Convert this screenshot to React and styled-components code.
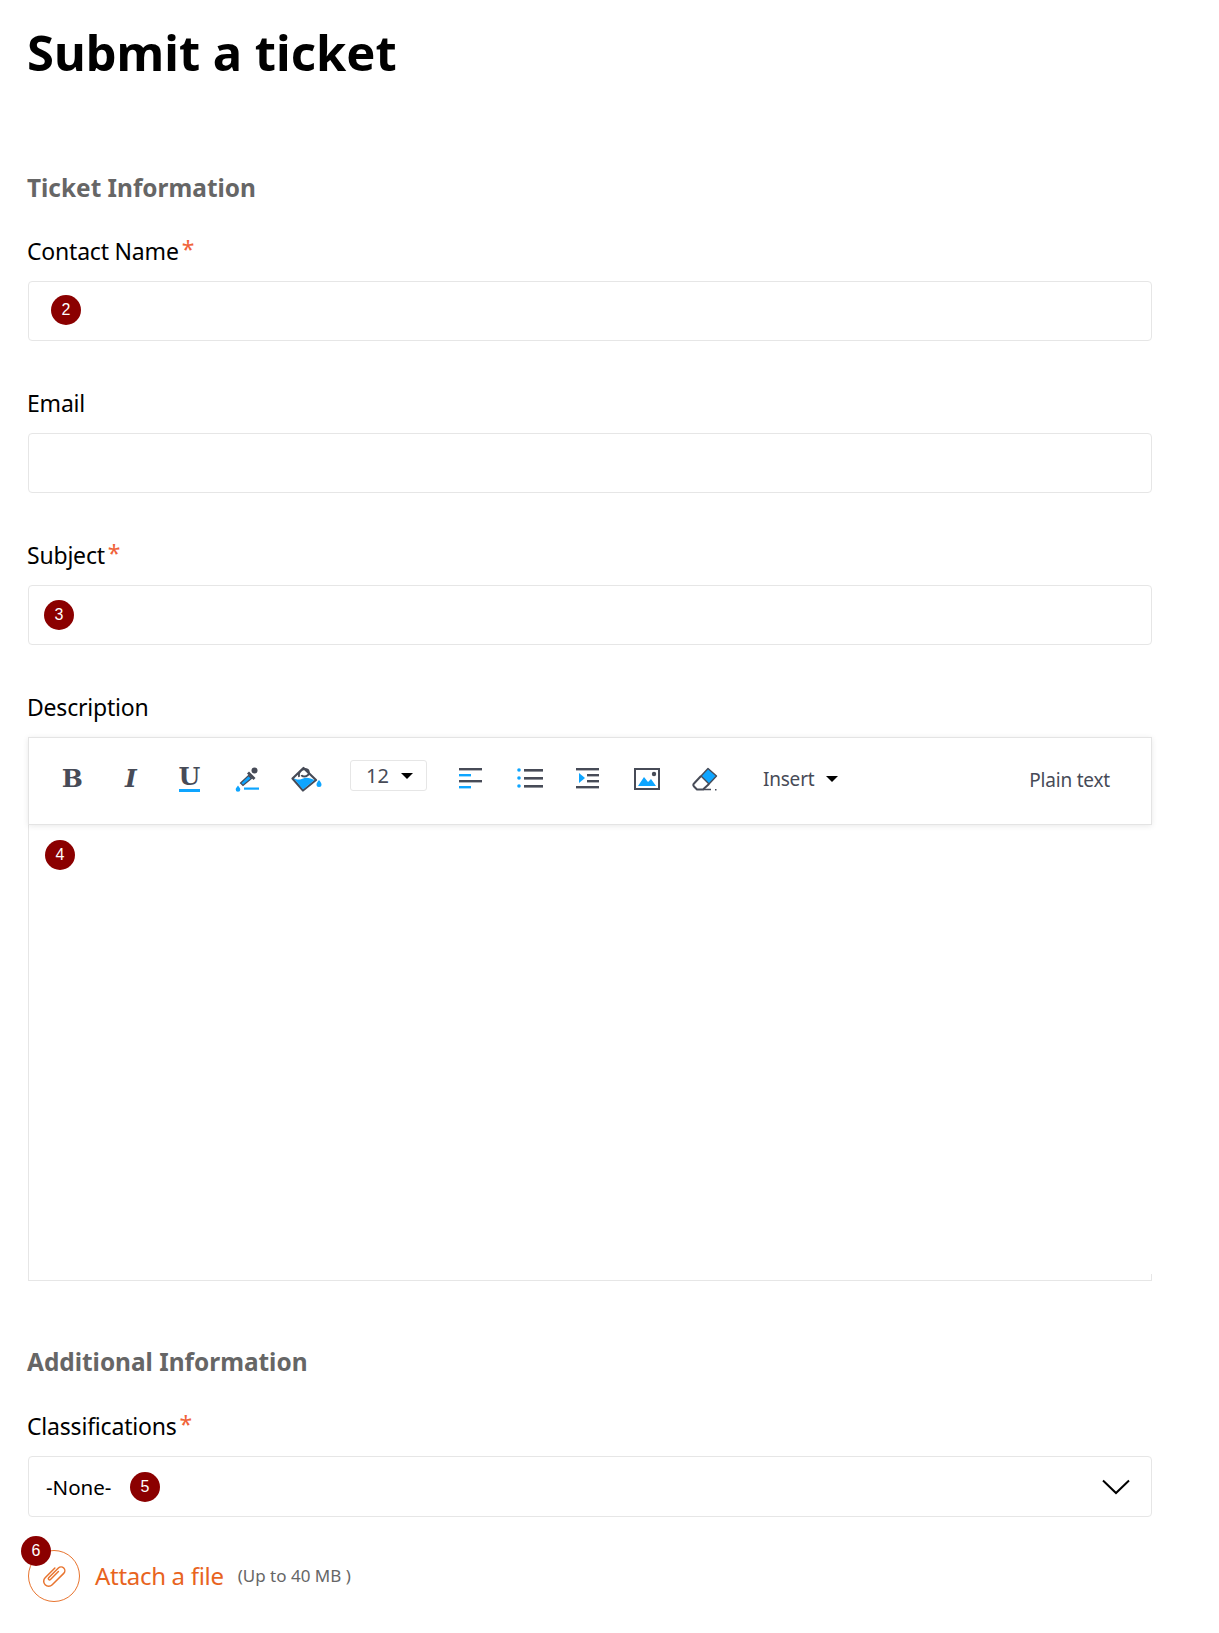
import React from 'react';
import styled, { createGlobalStyle } from 'styled-components';

const GlobalStyle = createGlobalStyle`
  html, body {
    margin: 0;
    padding: 0;
    background: #fff;
  }
  body {
    font-family: "Noto Sans", "Open Sans", sans-serif;
    color: #000;
  }
`;

const Page = styled.div`
  box-sizing: border-box;
  width: 1219px;
  height: 1633px;
  padding: 0 67px 0 28px;
  overflow: hidden;
`;

const Title = styled.h1`
  margin: 0 0 0 -1px;
  padding-top: 19px;
  height: 86px;
  font-size: 48.9px;
  line-height: 66px;
  font-weight: 700;
  color: #000;
`;

const SectionTitle = styled.h2`
  margin: 0 0 0 -1px;
  padding-top: ${(p) => p.$top}px;
  height: 34px;
  font-size: 24.4px;
  line-height: 34px;
  font-weight: 700;
  color: #666;
`;

const Label = styled.label`
  display: block;
  height: 34px;
  margin: ${(p) => p.$top}px 0 13px -1px;
  font-size: 23px;
  letter-spacing: -0.2px;
  line-height: 34px;
  color: #000;
`;

const Star = styled.span`
  margin-left: 3px;
  color: #f0633a;
  line-height: 0;
  vertical-align: 2px;
`;

const Field = styled.div`
  position: relative;
`;

const TextInput = styled.input`
  display: block;
  box-sizing: border-box;
  width: 100%;
  height: 60px;
  padding: 0 18px;
  background: #fff;
  border: 1px solid #e6e6e6;
  border-radius: 4px;
  outline: none;
`;

const Badge = styled.span`
  position: absolute;
  left: ${(p) => p.$left}px;
  top: ${(p) => p.$top}px;
  width: 30px;
  height: 30px;
  border-radius: 50%;
  background: #8b0000;
  color: #fff;
  font-family: "Liberation Sans", Arial, sans-serif;
  font-size: 16px;
  line-height: 29px;
  text-align: center;
`;

const Toolbar = styled.div`
  box-sizing: border-box;
  display: flex;
  align-items: center;
  height: 88px;
  padding: 0 41px 5px 14px;
  background: #fff;
  border: 1px solid #e4e4e4;
  box-shadow: 0 1px 6px rgba(0, 0, 0, 0.09);
  position: relative;
  z-index: 1;
`;

const ToolButton = styled.span`
  display: flex;
  align-items: center;
  justify-content: center;
  width: 58.6px;
  height: 30px;
  flex: none;
`;

const FormatLetter = styled.span`
  display: inline-block;
  font-family: "DejaVu Serif", "Liberation Serif", serif;
  font-size: 25px;
  line-height: 23px;
  font-weight: 700;
  font-style: ${(p) => (p.$italic ? 'italic' : 'normal')};
  color: #474b57;
  ${(p) => p.$underline && 'border-bottom: 3px solid #0ea5ff; padding: 0 0 1px;'}
`;

const SizeSelect = styled.span`
  box-sizing: border-box;
  display: flex;
  align-items: center;
  width: 77px;
  height: 31px;
  margin: -6px 15px 0 14px;
  padding-left: 15px;
  border: 1px solid #e6e6e6;
  border-radius: 3px;
  font-size: 20px;
  color: #474b57;
  flex: none;
`;

const Caret = styled.span`
  display: inline-block;
  width: 0;
  height: 0;
  margin-left: ${(p) => p.$gap}px;
  border-left: 6px solid transparent;
  border-right: 6px solid transparent;
  border-top: 6px solid #000;
`;

const InsertMenu = styled.span`
  display: flex;
  align-items: center;
  margin-left: 28px;
  font-size: 19px;
  letter-spacing: -0.2px;
  color: #474b57;
`;

const PlainText = styled.span`
  margin: 3px 0 0 auto;
  font-size: 19px;
  letter-spacing: -0.2px;
  color: #474b57;
`;

const Editor = styled.div`
  box-sizing: border-box;
  position: relative;
  height: 456px;
  border-left: 1px solid #e6e6e6;
  border-bottom: 1px solid #e6e6e6;

  &::after {
    content: '';
    position: absolute;
    right: 0;
    bottom: 0;
    width: 1px;
    height: 6px;
    background: #e6e6e6;
  }
`;

const SelectBox = styled.div`
  box-sizing: border-box;
  display: flex;
  align-items: center;
  justify-content: space-between;
  height: 61px;
  padding: 0 21px 0 17px;
  border: 1px solid #e6e6e6;
  border-radius: 4px;
  font-size: 20.5px;
  color: #000;
`;

const AttachRow = styled.div`
  position: relative;
  display: flex;
  align-items: center;
  margin-top: 33px;
`;

const AttachCircle = styled.span`
  box-sizing: border-box;
  display: flex;
  align-items: center;
  justify-content: center;
  width: 52px;
  height: 52px;
  border: 1px solid #e8742f;
  border-radius: 50%;
`;

const AttachLink = styled.span`
  margin: 0 0 2px 15px;
  font-size: 24px;
  letter-spacing: -0.3px;
  color: #e8641e;
`;

const AttachLimit = styled.span`
  margin: 0 0 2px 14px;
  font-size: 17px;
  color: #666;
`;

const dark = '#474b57';
const blue = '#0ea5ff';

const DropperIcon = () => (
  <svg width="26" height="26" viewBox="0 0 26 26">
    <circle cx="19.500" cy="4.500" r="3" fill={dark} />
    <path d="M14 5.500l6.500 6.500-2 2-6.500-6.500z" fill={dark} />
    <path d="M13.500 9.500l3 3-8.500 7-2.500-2.500z" fill={blue} stroke={dark} strokeWidth="1.200" />
    <path d="M3 19.500c1.300 1.700 2.300 2.800 2.300 4a2.300 2.300 0 0 1-4.600 0c0-1.200 1-2.300 2.300-4z" fill={blue} />
    <rect x="9" y="21.500" width="15" height="2.200" fill={blue} />
  </svg>
);

const BucketIcon = () => (
  <svg width="32" height="26" viewBox="0 0 32 26">
    <path d="M1.500 12.500L12.500 2 25 14 12 24.500z" fill="#fff" stroke={dark} strokeWidth="2.200" strokeLinejoin="round" />
    <path d="M2.500 12c5 3 8 1 11 0s7 1 10 2L12 23.500z" fill={blue} />
    <path d="M8 11c-1-4 2-8 6-8s5 4 3 6-6 2-6.500 0" fill="none" stroke={dark} strokeWidth="1.800" />
    <path d="M28 14c1.500 2 2.500 3.200 2.500 4.500a2.500 2.500 0 0 1-5 0c0-1.300 1-2.500 2.500-4.500z" fill={blue} />
  </svg>
);

const AlignIcon = () => (
  <svg width="24" height="22" viewBox="0 0 24 22">
    <rect y="0" width="23" height="2.400" fill={dark} />
    <rect y="6" width="12" height="2.400" fill={blue} />
    <rect y="12" width="23" height="2.400" fill={dark} />
    <rect y="18" width="12" height="2.400" fill={blue} />
  </svg>
);

const ListIcon = () => (
  <svg width="26" height="22" viewBox="0 0 26 22">
    <circle cx="2" cy="2" r="1.800" fill={blue} />
    <circle cx="2" cy="10" r="1.800" fill={blue} />
    <circle cx="2" cy="18" r="1.800" fill={blue} />
    <rect x="7" y="1" width="19" height="2.600" fill={dark} />
    <rect x="7" y="9" width="19" height="2.600" fill={dark} />
    <rect x="7" y="17" width="19" height="2.600" fill={dark} />
  </svg>
);

const IndentIcon = () => (
  <svg width="24" height="22" viewBox="0 0 24 22">
    <rect y="0" width="23" height="2.400" fill={dark} />
    <rect x="11" y="6" width="12" height="2.400" fill={dark} />
    <rect x="11" y="12" width="12" height="2.400" fill={dark} />
    <rect y="18" width="23" height="2.400" fill={dark} />
    <path d="M3 5l6 5-6 5z" fill={blue} />
  </svg>
);

const ImageIcon = () => (
  <svg width="26" height="22" viewBox="0 0 26 22">
    <rect x="1" y="1" width="24" height="20" fill="#fff" stroke={dark} strokeWidth="2" />
    <path d="M4 18l6-9 4 5 3-3 5 7z" fill={blue} />
    <circle cx="20" cy="6" r="2.200" fill={dark} />
  </svg>
);

const EraserIcon = () => (
  <svg width="28" height="26" viewBox="0 0 28 26">
    <path d="M16 2.500L24.500 10 17 18 9 10z" fill={blue} stroke={dark} strokeWidth="1.400" strokeLinejoin="round" />
    <path d="M9 10L2 17.500c-1 1-.8 2 0 3L5 23.500h6L17 18" fill="none" stroke={dark} strokeWidth="2" strokeLinejoin="round" />
    <path d="M11 23.500h8" stroke={dark} strokeWidth="1.500" />
    <rect x="23" y="23" width="1.500" height="1.500" fill={dark} />
  </svg>
);

const ChevronIcon = () => (
  <svg width="28" height="16" viewBox="0 0 28 16">
    <path d="M1 1.500L14 14 27 1.500" fill="none" stroke="#000" strokeWidth="2" />
  </svg>
);

const ClipIcon = () => (
  <svg width="30" height="30" viewBox="0 0 24 24" fill="none" stroke="#e8742f" strokeWidth="1.200" strokeLinecap="round">
    <path transform="rotate(45 12 12)" d="M8 7v11a4 4 0 0 0 8 0V5a3 3 0 0 0-6 0v11a1 1 0 0 0 2 0V7" />
  </svg>
);

const toolIcons = [AlignIcon, ListIcon, IndentIcon, ImageIcon, EraserIcon];

export default function App() {
  return (
    <Page>
      <GlobalStyle />
      <Title>Submit a ticket</Title>

      <SectionTitle $top={66}>Ticket Information</SectionTitle>

      <Label $top={29}>Contact Name<Star>*</Star></Label>
      <Field>
        <TextInput type="text" />
        <Badge $left={23} $top={14}>2</Badge>
      </Field>

      <Label $top={45}>Email</Label>
      <Field>
        <TextInput type="text" />
      </Field>

      <Label $top={45}>Subject<Star>*</Star></Label>
      <Field>
        <TextInput type="text" />
        <Badge $left={16} $top={15}>3</Badge>
      </Field>

      <Label $top={45}>Description</Label>
      <Toolbar>
        <ToolButton><FormatLetter>B</FormatLetter></ToolButton>
        <ToolButton><FormatLetter $italic>I</FormatLetter></ToolButton>
        <ToolButton><FormatLetter $underline>U</FormatLetter></ToolButton>
        <ToolButton><DropperIcon /></ToolButton>
        <ToolButton><BucketIcon /></ToolButton>
        <SizeSelect>12<Caret $gap={12} /></SizeSelect>
        {toolIcons.map((Icon, i) => (
          <ToolButton key={i}><Icon /></ToolButton>
        ))}
        <InsertMenu>Insert<Caret $gap={12} /></InsertMenu>
        <PlainText>Plain text</PlainText>
      </Toolbar>
      <Editor>
        <Badge $left={16} $top={15}>4</Badge>
      </Editor>

      <SectionTitle $top={64}>Additional Information</SectionTitle>

      <Label $top={30}>Classifications<Star>*</Star></Label>
      <Field>
        <SelectBox>
          -None-
          <ChevronIcon />
        </SelectBox>
        <Badge $left={102} $top={16}>5</Badge>
      </Field>

      <AttachRow>
        <AttachCircle><ClipIcon /></AttachCircle>
        <Badge $left={-7} $top={-14}>6</Badge>
        <AttachLink>Attach a file</AttachLink>
        <AttachLimit>(Up to 40 MB )</AttachLimit>
      </AttachRow>
    </Page>
  );
}
